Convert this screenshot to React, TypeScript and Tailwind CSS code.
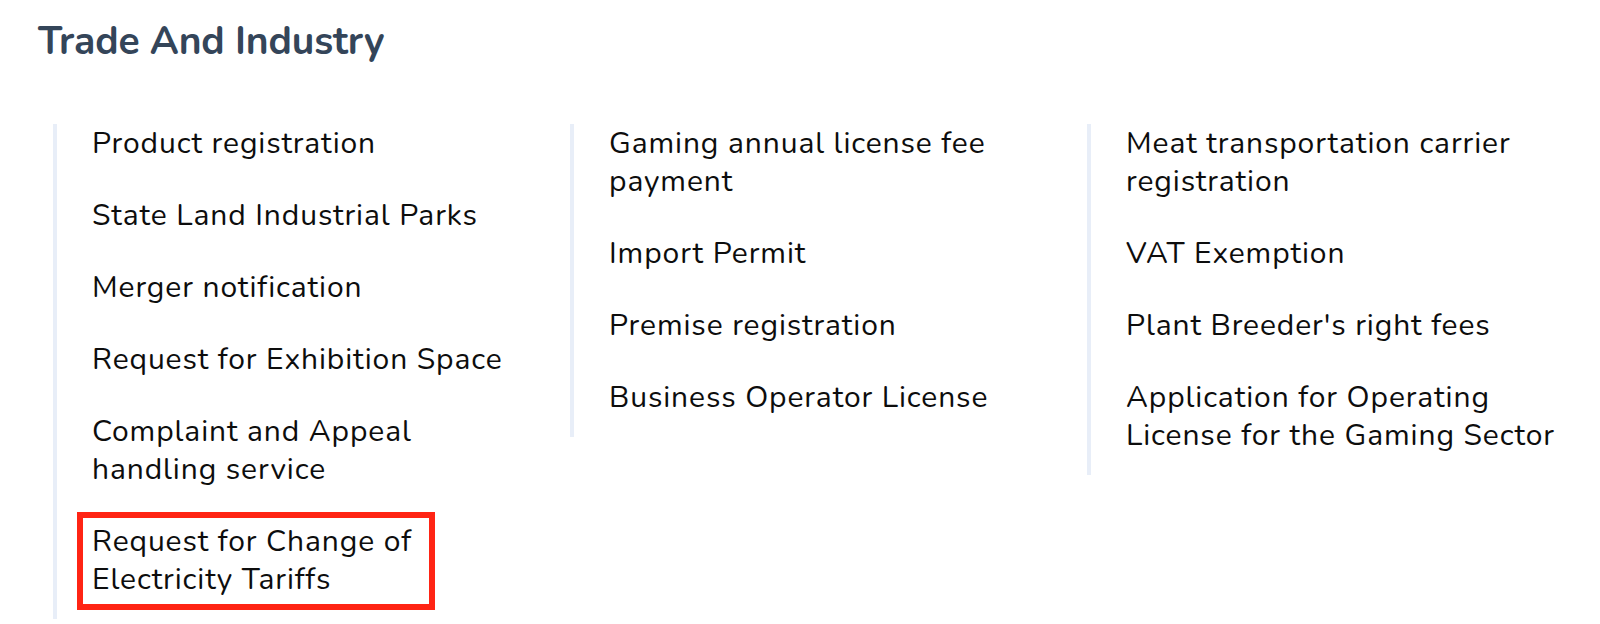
import React from 'react';

const columns: string[][] = [
  [
    'Product registration',
    'State Land Industrial Parks',
    'Merger notification',
    'Request for Exhibition Space',
    'Complaint and Appeal handling service',
    'Request for Change of Electricity Tariffs',
  ],
  [
    'Gaming annual license fee payment',
    'Import Permit',
    'Premise registration',
    'Business Operator License',
  ],
  [
    'Meat transportation carrier registration',
    'VAT Exemption',
    "Plant Breeder's right fees",
    'Application for Operating License for the Gaming Sector',
  ],
];

const highlighted = 'Request for Change of Electricity Tariffs';

export default function App() {
  return (
    <div className="w-[1600px] h-[624px] bg-white overflow-hidden font-['Nunito','Lato',sans-serif]">
      <h1 className="pl-[38px] pt-[16px] text-[39px] leading-[52px] font-bold text-[#344559] tracking-[-0.15px]">
        Trade And Industry
      </h1>

      <div className="grid grid-cols-[517px_517px_517px] pl-[53px] mt-[56px] items-start">
        {columns.map((items, ci) => (
          <ul key={ci} className="border-l-4 border-[#e8eef8] pt-[1px] pl-[35px] pr-[30px] pb-[20px] flex flex-col gap-[34px]">
            {items.map((item) => (
              <li key={item} className="relative text-[30px] leading-[38px] tracking-[0.9px] text-[#0d0d0d]">
                {item === highlighted && (
                  <span className="absolute left-[-15px] top-[-11px] bottom-[-11px] w-[358px] border-[6px] border-[#ff2414]" />
                )}
                <span className="relative">{item}</span>
              </li>
            ))}
          </ul>
        ))}
      </div>
    </div>
  );
}
